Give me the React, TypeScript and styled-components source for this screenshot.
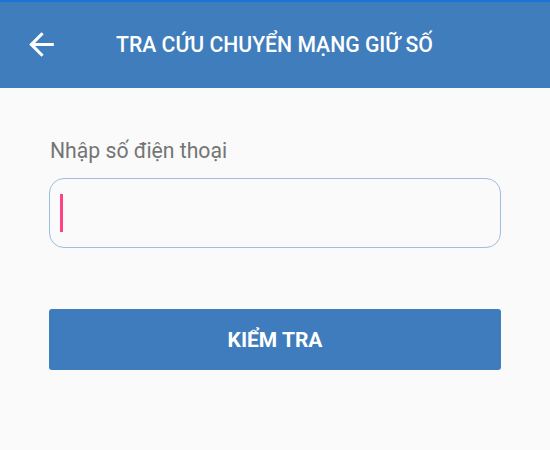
import React from "react";
import styled, { createGlobalStyle } from "styled-components";

const Global = createGlobalStyle`
  html, body { margin: 0; padding: 0; background: #fafafa; }
  body { font-family: Roboto, "Noto Sans", sans-serif; }
  * { box-sizing: border-box; }
`;

const Page = styled.div`
  width: 550px;
  height: 450px;
  background: #fafafa;
  display: flex;
  flex-direction: column;
`;

const Header = styled.header`
  height: 88px;
  background: #3f7dbd;
  border-top: 2px solid #1a73d6;
  display: flex;
  align-items: center;
  padding-left: 23px;
  padding-bottom: 1px;
`;

const BackButton = styled.button`
  width: 37px;
  height: 37px;
  padding: 0;
  border: none;
  background: transparent;
  display: flex;
  align-items: center;
  justify-content: center;
  cursor: pointer;
`;

const Title = styled.h1`
  margin: 0 0 0 56px;
  font-family: Roboto, sans-serif;
  font-weight: 500;
  font-size: 21.2px;
  color: #ffffff;
`;

const Content = styled.main`
  display: flex;
  flex-direction: column;
  padding: 50px 49px 0 49px;
`;

const Label = styled.label`
  font-family: Roboto, sans-serif;
  font-size: 21.2px;
  color: #757575;
  line-height: 25px;
  padding-left: 1px;
`;

const InputBox = styled.div`
  margin-top: 15px;
  height: 70px;
  border: 1px solid #9dbde2;
  border-radius: 15px;
  background: #fafafa;
  display: flex;
  align-items: center;
  padding-left: 10px;
`;

const Caret = styled.span`
  width: 3px;
  height: 38px;
  background: #ff4081;
`;

const Button = styled.button`
  margin-top: 61px;
  height: 61px;
  border: none;
  border-radius: 3px;
  background: #3e7cbd;
  color: #ffffff;
  font-family: Roboto, sans-serif;
  font-weight: 700;
  font-size: 21px;
  cursor: pointer;
`;

export default function App() {
  return (
    <Page>
      <Global />
      <Header>
        <BackButton aria-label="back">
          <svg width="37" height="37" viewBox="0 0 24 24">
            <path
              d="M20 11H7.83l5.59-5.59L12 4l-8 8 8 8 1.41-1.41L7.83 13H20v-2z"
              fill="#ffffff"
            />
          </svg>
        </BackButton>
        <Title>TRA CỨU CHUYỂN MẠNG GIỮ SỐ</Title>
      </Header>
      <Content>
        <Label>Nhập số điện thoại</Label>
        <InputBox>
          <Caret />
        </InputBox>
        <Button>KIỂM TRA</Button>
      </Content>
    </Page>
  );
}
